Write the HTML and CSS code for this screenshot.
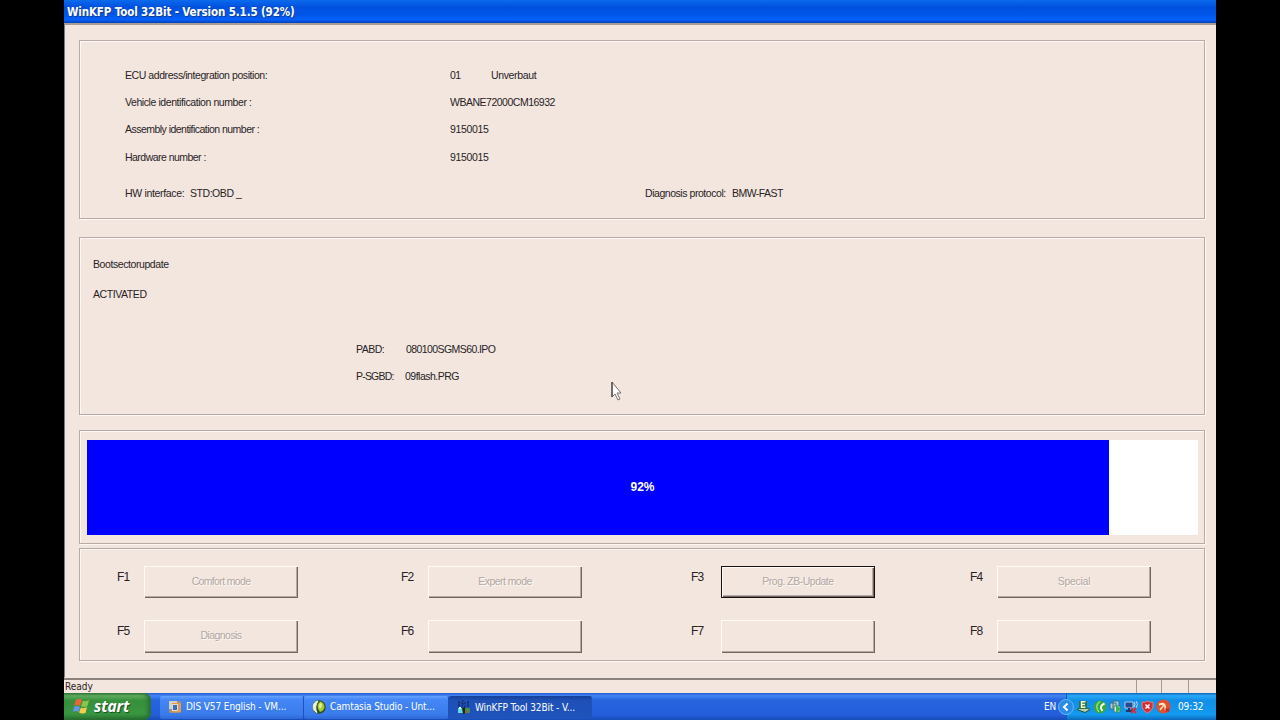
FILE: index.html
```html
<!DOCTYPE html>
<html lang="en">
<head>
<meta charset="utf-8">
<title>WinKFP Tool 32Bit</title>
<link rel="stylesheet" href="styles.css">
</head>
<body>
<div class="screen">
  <header class="titlebar">WinKFP Tool 32Bit - Version 5.1.5 (92%)</header>
  <main class="client">
    <section class="panel vehicle">
      <div class="row"><span class="label w-ecu">ECU address/integration position:</span><span class="pos">01</span><span class="w-unv">Unverbaut</span></div>
      <div class="row"><span class="label w-vin">Vehicle identification number :</span><span class="w-code">WBANE72000CM16932</span></div>
      <div class="row"><span class="label w-asm">Assembly identification number :</span><span class="w-num">9150015</span></div>
      <div class="row"><span class="label w-hw">Hardware number :</span><span class="w-num">9150015</span></div>
      <div class="row interface"><span class="hwif">HW interface:</span><span class="std">STD:OBD _</span><span class="diag">Diagnosis protocol:</span><span class="fast">BMW-FAST</span></div>
    </section>
    <section class="panel boot">
      <div class="row w-boot">Bootsectorupdate</div>
      <div class="row activated">ACTIVATED</div>
      <div class="row file first"><span class="key">PABD:</span><span class="w-ipo">080100SGMS60.IPO</span></div>
      <div class="row file"><span class="key w-sgbd">P-SGBD:</span><span class="w-prg">09flash.PRG</span></div>
    </section>
    <section class="panel progress">
      <div class="track"><div class="fill" style="width:92%"></div><span class="percent">92%</span></div>
    </section>
    <section class="panel keys">
      <span class="fn">F1</span><button class="w-comfort" disabled>Comfort mode</button>
      <span class="fn">F2</span><button class="w-expert" disabled>Expert mode</button>
      <span class="fn">F3</span><button class="default w-prog" disabled>Prog. ZB-Update</button>
      <span class="fn">F4</span><button class="w-special" disabled>Special</button>
      <span class="fn low">F5</span><button class="w-diagnosis" disabled>Diagnosis</button>
      <span class="fn low">F6</span><button disabled></button>
      <span class="fn low">F7</span><button disabled></button>
      <span class="fn low">F8</span><button disabled></button>
    </section>
  </main>
  <footer class="status"><span class="ready">Ready</span><i></i><i></i><i></i></footer>
  <nav class="taskbar">
    <div class="start">
      <svg width="17" height="16" viewBox="0 0 17 16"><path d="M3 2Q6 0 9 2L7 8Q4 6 1 8Z" fill="#ed6236"/><path d="M10 2.500Q13 4 16 2L14.500 8Q11 10 8 8Z" fill="#88c64b"/><path d="M1 9Q4 7 7 9L5.500 14Q3 12 0 14Z" fill="#6795ed"/><path d="M8 9.500Q11 11 14 9L12.500 15Q9 16 6 14.500Z" fill="#f5cf45"/></svg>
      <span>start</span>
    </div>
    <div class="task dis">
      <svg width="14" height="14" viewBox="0 0 14 14"><rect x="1" y="1" width="12" height="12" rx="1.500" fill="#a98f76"/><path d="M1 3V1h8v2H4v6H1z" fill="#d5cfc6"/><path d="M4 3h9v9H4z" fill="#e39a4a"/><rect x="4.500" y="4.500" width="5" height="6" fill="#3b6fb4" stroke="#d8dce0"/></svg>
      <span>DIS V57 English - VM...</span>
    </div>
    <div class="task cam">
      <svg width="14" height="14" viewBox="0 0 14 14"><circle cx="7" cy="7" r="6.700" fill="#2c4c20"/><path d="M6 1A6 6 0 0 0 5 12.500Q2 7 6 1" fill="#eef5da" stroke="#eef5da"/><path d="M8 1.500Q3 6 8 12Q12 11 12.500 7Q12 2 8 1.500" fill="#a3cc3c"/><path d="M8 3Q6 6 8 9Q10 7 10 4" fill="#e9f08f"/></svg>
      <span>Camtasia Studio - Unt...</span>
    </div>
    <div class="task kfp">
      <svg width="14" height="15" viewBox="0 0 14 15"><path d="M2 1v6M6 0v6M11 1v6M1 3h12M1 6h12" stroke="#102b58" stroke-dasharray="2 1"/><rect x="1" y="8" width="5" height="5" fill="#65d9e9"/><rect x="2" y="7" width="2" height="2" fill="#d6ffff"/><path d="M5 8l3-1 1 6-3 1z" fill="#17281d"/><rect x="8" y="8" width="5" height="5" rx="1" fill="#4c8b51"/><path d="M8 10l2 2-2 2z" fill="#a75749"/></svg>
      <span>WinKFP Tool 32Bit - V...</span>
    </div>
    <span class="lang">EN</span>
    <div class="tray">
      <svg class="chevron" width="16" height="16" viewBox="0 0 16 16"><circle cx="8" cy="8" r="7.500" fill="#2b8be8" stroke="#63b7f7"/><path d="M9.500 4.500L6 8l3.500 3.500" fill="none" stroke="#fff" stroke-width="2"/></svg>
      <svg width="15" height="14" viewBox="0 0 15 14"><path d="M1 9.500l4-2h5l4 2-5 3z" fill="#b9cfae" stroke="#1f5533"/><path d="M3 1h8v8H3z" fill="#2d7440"/><path d="M9.500 1.800h-4v5.400h4M5.500 4.500h3.500" fill="none" stroke="#f1f7d9" stroke-width="1.400"/></svg>
      <svg width="14" height="14" viewBox="0 0 14 14"><circle cx="7" cy="7" r="6.500" fill="#35a845"/><path d="M7 1.500Q1 6 6 12" stroke="#8fdc86" stroke-width="1.500" fill="none"/><path d="M11.500 3.500Q5.500 6 9.500 11" stroke="#f1ffdf" stroke-width="2" fill="none"/></svg>
      <svg width="13" height="14" viewBox="0 0 13 14"><path d="M1 3h6v6H1zM4 1h6v7H4z" fill="#a5d0ce" stroke="#356e91"/><path d="M5 6h6v6H5z" fill="#dceedb" stroke="#487f82"/><path d="M7 5l5 4-5 4z" fill="#35b64f"/></svg>
      <svg width="15" height="14" viewBox="0 0 15 14"><path d="M1 2h8v6H1z" fill="#244d91" stroke="#b9c8e0"/><path d="M5 8v3M2 11h6" stroke="#1f3a66" stroke-width="2"/><path d="M10 2q2 2 0 5M12 1q3 3 0 7" fill="none" stroke="#b8ddec"/><path d="M7 8l5 5M12 8l-5 5" stroke="#d22f42" stroke-width="2"/></svg>
      <svg width="13" height="14" viewBox="0 0 13 14"><path d="M1 2q3 1 5.500-1Q9 3 12 2v5q-1 4-5.500 6Q2 11 1 7z" fill="#d52b37" stroke="#d9867f"/><path d="M4.500 4.500l4 4M8.500 4.500l-4 4" stroke="#fff" stroke-width="1.500"/></svg>
      <svg width="15" height="15" viewBox="0 0 15 15"><circle cx="7.500" cy="7.500" r="7" fill="#e0522f"/><path d="M3 4.500q5-2 6.500 1l1 6H9L8 7l-3.500 4.500-1-1.500L7 6.500q-2-1-4 0z" fill="#ffe7bd"/><path d="M9.500 9.500l3.500 3M13 9.500l-3.500 3" stroke="#c2261f" stroke-width="1.500"/></svg>
      <span class="clock">09:32</span>
    </div>
  </nav>
  <svg class="cursor" width="12" height="20" viewBox="0 0 12 20"><path d="M1 1v15l3-3 3 6 2-1-3-6h4z" fill="#fff" stroke="#77706d"/><path d="M1 1v15" stroke="#2b2827"/></svg>
</div>
</body>
</html>
```
FILE: styles.css
```css
* { box-sizing: border-box; }
body { margin: 0; background: #000; }
.screen { position: relative; width: 1152px; height: 720px; margin: 0 auto; display: flex; flex-direction: column; overflow: hidden; background: #f2e6df; font: 10.5px/14px "Liberation Sans", Arial, sans-serif; color: #29231f; }
.titlebar { height: 23px; flex: none; padding: 4px 3px; color: #fff; font: bold 11.5px/17px "DejaVu Sans Condensed", "DejaVu Sans", sans-serif; letter-spacing: -.12px; white-space: pre; text-shadow: 1px 1px #143c8c; background: linear-gradient(#0b6bed, #0051de 30%, #0055e8 60%, #0660fb 86%, #0340b5); }
.client { height: 655px; flex: none; padding: 15px 11px 0 14px; border-left: 1px solid #777b85; border-top: 2px solid #a79d98; border-bottom: 1px solid #eee9e5; display: flex; flex-direction: column; }
.panel { border: 1px solid #b8aaa7; box-shadow: inset 1px 1px #fff8f4, 1px 1px #fff8f4; flex: none; }
.vehicle { height: 179px; padding: 27px 45px 0; }
.row { display: flex; height: 14px; white-space: pre; }
.vehicle .row + .row { margin-top: 13px; }
.vehicle .row:nth-child(4) { margin-top: 14px; }
.vehicle .row.interface:last-child { margin-top: 22px; }
.label { width: 325px; }
.pos { width: 41px; letter-spacing: -.5px; }
.hwif { width: 65px; letter-spacing: -.33px; }
.std { width: 455px; letter-spacing: -.45px; }
.diag { width: 87px; letter-spacing: -.45px; }
.fast { letter-spacing: -.55px; }
.w-ecu { letter-spacing: -.43px; }
.w-vin { letter-spacing: -.42px; }
.w-asm, .w-hw { letter-spacing: -.53px; }
.w-code { letter-spacing: -.49px; }
.w-unv, .w-num { letter-spacing: -.35px; }
.w-boot, .activated { letter-spacing: -.42px; }
.w-ipo { letter-spacing: -.58px; }
.w-prg { margin-left: -1px; letter-spacing: -.5px; }
.boot { height: 178px; margin-top: 18px; padding: 19px 13px; }
.activated { margin-top: 16px; }
.file { margin: 13px 0 0 263px; }
.file.first { margin-top: 41px; }
.key { width: 50px; letter-spacing: -.5px; }
.w-sgbd { letter-spacing: -.8px; }
.progress { height: 114px; margin-top: 15px; padding: 9px 6px 9px 7px; }
.track { position: relative; height: 95px; background: #fff; }
.fill { height: 100%; background: #0000fe; }
.percent { position: absolute; inset: 0 0 2px; display: flex; align-items: center; justify-content: center; color: #fff; font: bold 12px "Liberation Sans", Arial, sans-serif; }
.keys { height: 113px; margin-top: 4px; padding: 17px 37px 0; display: grid; grid-template-columns: 27px 257px 27px 263px 30px 249px 27px 155px; grid-template-rows: 54px 33px; }
.fn { font-size: 12px; padding-top: 4px; letter-spacing: -.9px; }
button { width: 154px; height: 32px; padding: 0 0 3px; border: 0; background: transparent; color: #b2a7a3; font: 10.5px/14px "Liberation Sans", Arial, sans-serif; text-shadow: 1px 1px #fffaf5; box-shadow: inset 1px 1px #fffaf6, inset -1px -1px #716561, inset -2px -2px #b7aaa4; }
.low + button { height: 33px; }
button.default { box-shadow: inset 0 0 0 1px #16110f, inset 2px 2px #fffaf6, inset -2px -2px #716561, inset -3px -3px #b7aaa4; }
.w-comfort { letter-spacing: -.65px; }
.w-expert, .w-diagnosis { letter-spacing: -.55px; }
.w-prog { letter-spacing: -.5px; }
.w-special { letter-spacing: -.3px; }
.status { height: 15px; flex: none; display: grid; grid-template-columns: 1072px 25px 27px 28px; border-top: 2px solid #8d817c; color: #292420; }
.status i { border-left: 1px solid #a69b96; }
.ready { padding-left: 1px; font: 10px/13px "DejaVu Sans Condensed", "DejaVu Sans", sans-serif; }
.taskbar { height: 27px; flex: none; display: flex; align-items: stretch; color: #fff; background: linear-gradient(#265acc, #4385f4 10%, #2865df 25%, #245edb 80%, #174bb9); font: 10px/14px "DejaVu Sans Condensed", "DejaVu Sans", sans-serif; letter-spacing: -.1px; white-space: pre; }
.start { width: 87px; padding: 0 0 2px 9px; display: flex; align-items: center; gap: 4px; border-radius: 0 7px 7px 0; background: linear-gradient(#35813a, #62ad60 10%, #37903b 28%, #389641 78%, #286b2d); box-shadow: inset -3px 0 4px #276e35; font: italic bold 15.5px "Open Sans", sans-serif; text-shadow: 1px 1px 1px #174d20; }
.task { width: 144px; margin: 3px 0 1px; display: flex; align-items: center; gap: 4px; padding: 0 0 1px 8px; background: linear-gradient(#65a1ff, #4587f6 15%, #397bea 80%, #2e67d6); border-right: 1px solid #2052b9; border-radius: 2px; }
.dis { margin-left: 9px; }
.cam { width: 145px; }
.kfp { width: 143px; padding-bottom: 0; background: linear-gradient(#163f98, #1e50b7 20%, #1f54bd); }
.lang { margin: 7px 0 0 auto; width: 22px; }
.tray { width: 150px; display: flex; align-items: center; gap: 2px; background: linear-gradient(#0b63bc, #29a8f6 10%, #118ee8 27%, #139aef 80%, #0c69bc); border-left: 1px solid #105bb8; }
.chevron { margin-left: -9px; }
.clock { margin-left: 5px; }
.cursor { position: absolute; left: 547px; top: 381px; }
```
